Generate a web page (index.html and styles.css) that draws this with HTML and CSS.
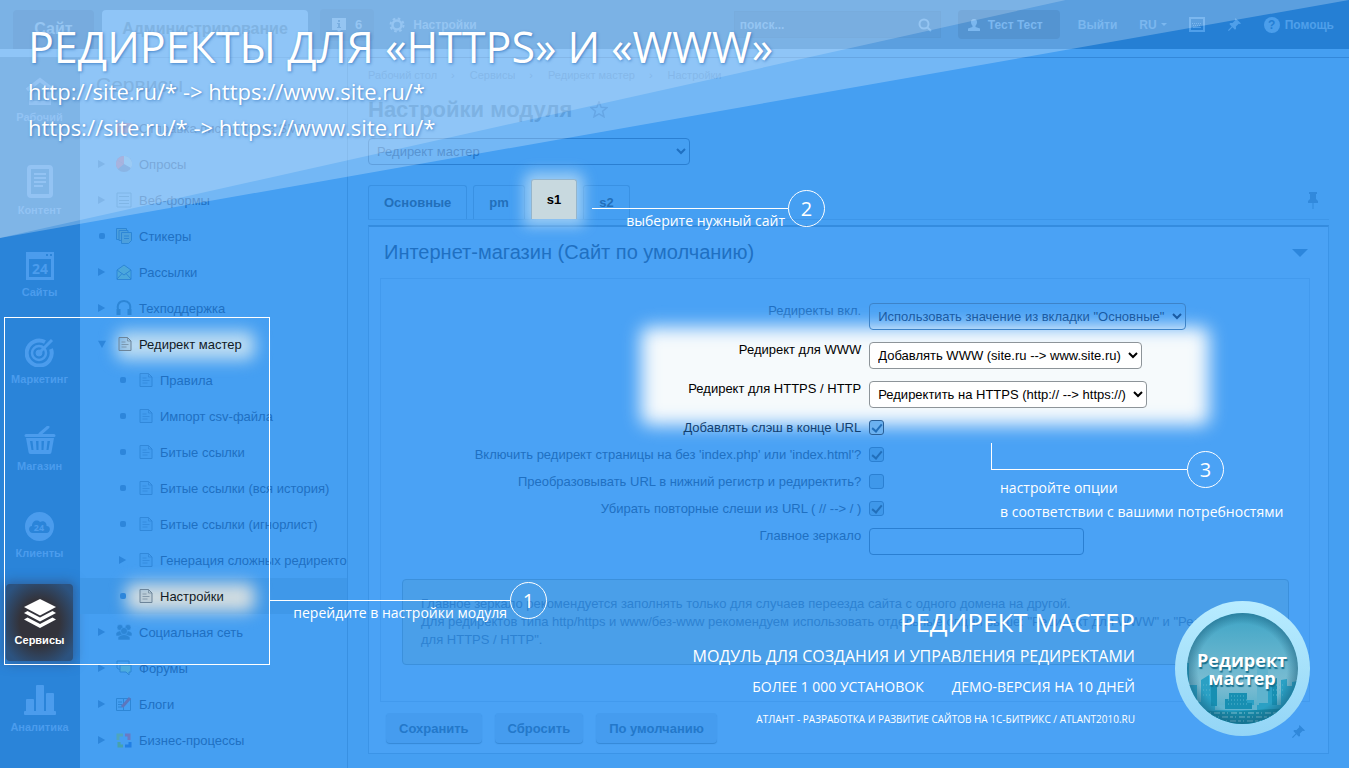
FILE: index.html
```html
<!DOCTYPE html>
<html lang="ru">
<head>
  <meta charset="UTF-8" />
  <meta name="viewport" content="width=device-width, initial-scale=1.0" />
  <title>Редирект мастер - Настройки модуля</title>
  <link rel="stylesheet" href="styles.css">
</head>
<body>

  <!-- общие иконки -->
  <svg class="sprite" aria-hidden="true">
    <symbol id="i-doc" viewBox="0 0 14 16">
      <path d="M1 1.500h8.500l3.500 3.500v9.500H1z" fill="currentColor" fill-opacity=".12" stroke="currentColor"/>
      <path d="M9.500 1.500V5H13M3.500 6h4M3.500 8.500h7M3.500 11h5" fill="none" stroke="currentColor" stroke-opacity=".7"/>
    </symbol>
    <symbol id="i-pin" viewBox="0 0 16 16">
      <path d="M9 1l6 6-1.500.5-1-.3-3 3 .2 2.300-1.200 1L5.800 11 2 15l-1-1 4-3.800L2.500 7.500l1-1.200 2.300.2 3-3-.3-1z" fill="currentColor"/>
    </symbol>
  </svg>

  <header class="topbar">
    <a class="tab-site" href="#">Сайт</a>
    <a class="tab-admin" href="#">Администрирование</a>
    <button class="notice" type="button">
      <svg width="15" height="14" viewBox="0 0 15 14"><path fill="currentColor" fill-rule="evenodd" d="M0 0h14v12H9l-2 2-2-2H0zM6 2v2h2V2zM5 5v1h1v3H5v1h4V9H8V5z"/></svg>
      6
    </button>
    <a class="top-link settings" href="#">
      <svg width="16" height="16" viewBox="0 0 16 16" fill="none" stroke="currentColor"><circle cx="8" cy="8" r="4.500" stroke-width="2.500"/><circle cx="8" cy="8" r="6.500" stroke-width="2" stroke-dasharray="2.600 2.500"/></svg>
      Настройки
    </a>
    <div class="search">
      <input type="text" placeholder="поиск..." aria-label="Поиск">
      <svg width="14" height="14" viewBox="0 0 14 14" fill="none" stroke="currentColor" stroke-width="2"><circle cx="6" cy="6" r="4.500"/><path d="M9 9l4 4"/></svg>
    </div>
    <button class="user" type="button">
      <svg width="12" height="12" viewBox="0 0 12 12"><path fill="currentColor" d="M6 0c2.500 0 3 1.500 3 3 0 1.800-.8 3-1.500 3.800V8L12 9.500V12H0V9.500L4.500 8V6.800C3.800 6 3 4.800 3 3c0-1.500.5-3 3-3z"/></svg>
      Тест Тест
    </button>
    <a class="top-link" href="#">Выйти</a>
    <a class="top-link" href="#">RU <span class="caret"></span></a>
    <a class="top-link" href="#" aria-label="Горячие клавиши">
      <svg width="16" height="15" viewBox="0 0 16 15"><path fill="none" stroke="currentColor" stroke-width="2" d="M1 1h14v13H1z"/><path stroke="currentColor" stroke-dasharray="1 1" d="M3 6.500h10M4 8.500h8"/><path stroke="currentColor" d="M4 10.500h8"/></svg>
    </a>
    <a class="top-link" href="#" aria-label="Закрепить"><svg width="15" height="15"><use href="#i-pin"/></svg></a>
    <a class="top-link help" href="#"><span class="help-mark">?</span>Помощь</a>
  </header>

  <div class="layout">
    <nav class="rail">
      <a class="rail-item rail-home" href="#">
        <svg width="30" height="28" viewBox="0 0 30 28" fill="none" stroke="currentColor" stroke-width="4"><path d="M2 13L15 3l13 10M6 15v11h18V15"/></svg>
        Рабочий
      </a>
      <a class="rail-item rail-content" href="#">
        <svg width="26" height="33" viewBox="0 0 26 33" fill="none" stroke="currentColor"><rect x="2" y="2" width="22" height="29" rx="2" stroke-width="4"/><path stroke-width="2" d="M7 9h12M7 13h12M7 17h12M7 21h9"/></svg>
        Контент
      </a>
      <a class="rail-item" href="#">
        <svg width="28" height="28" viewBox="0 0 28 28"><path fill="currentColor" fill-rule="evenodd" d="M0 0h28v28H0zM3 7v18h22V7zM20 2v2h2V2zM24 2v2h2V2z"/><text class="icon-num" x="14" y="22" text-anchor="middle">24</text></svg>
        Сайты
      </a>
      <a class="rail-item" href="#">
        <svg width="29" height="29" viewBox="0 0 29 29" fill="none" stroke="currentColor"><path stroke-width="4" d="M20 4A12.500 12.500 0 1 0 26 11"/><circle cx="14" cy="15" r="7" stroke-width="2.500"/><circle cx="14" cy="15" r="3" fill="currentColor"/><path stroke-width="3" d="M15 14L27 2"/></svg>
        Маркетинг
      </a>
      <a class="rail-item" href="#">
        <svg width="32" height="28" viewBox="0 0 32 28"><path stroke="currentColor" stroke-width="3" stroke-linecap="round" d="M2 9.500h28M16 8l8-7"/><path fill="currentColor" fill-rule="evenodd" d="M2 12h28l-2.500 14a2 2 0 0 1-2 2h-19a2 2 0 0 1-2-2zM6 15l1.500 9h2L8.500 15zM12 15l.5 9h2V15zM17.500 15v9h2l.5-9zM23.500 15l-1 9h2L26 15z"/></svg>
        Магазин
      </a>
      <a class="rail-item" href="#">
        <svg width="29" height="29" viewBox="0 0 29 29"><path fill="currentColor" fill-rule="evenodd" d="M14.500 0a14.500 14.500 0 1 0 0 29 14.500 14.500 0 0 0 0-29zM8 21c-5 0-5-7-1-7 0-5 5-7 8-4 4-2 7 1 6.500 4 5 0 4 7 0 7z"/><text class="icon-num small" x="14" y="19" text-anchor="middle">24</text></svg>
        Клиенты
      </a>
      <a class="rail-item active" href="#">
        <svg width="32" height="29" viewBox="0 0 32 29" fill="currentColor"><path d="M16 0l16 8-16 8.500L0 8z"/><path d="M0 14l3.500-2L16 18.500 28.500 12l3.500 2-16 8.500z"/><path d="M0 20.500l3.500-2L16 25l12.500-6.500 3.500 2L16 29z"/></svg>
        Сервисы
      </a>
      <a class="rail-item" href="#">
        <svg width="32" height="30" viewBox="0 0 32 30" fill="currentColor"><rect x="2" y="14" width="8" height="13" rx="1"/><rect x="12" y="0" width="8" height="27" rx="1"/><rect x="22" y="8" width="8" height="19" rx="1"/><rect y="26" width="32" height="4" rx="1"/></svg>
        Аналитика
      </a>
    </nav>

    <aside class="menu">
      <h2>Сервисы</h2>
      <ul>
        <li><a href="#"><i class="arrow"></i><svg class="ico red" viewBox="0 0 16 16"><rect x="0" y="3" width="16" height="10" rx="2" fill="currentColor"/></svg>Отправка писем через SMTP</a></li>
        <li><a href="#"><i class="arrow"></i><svg class="ico" viewBox="0 0 16 16"><circle cx="8" cy="8" r="8" fill="#3d84d4"/><path d="M8 8L1 4a8 8 0 0 0 1 9z" fill="#6f80c8"/><path d="M8 8V0a8 8 0 0 0-7 4z" fill="#6f80c8"/><path d="M8 8V0a8 8 0 0 1 7 12z" fill="#5aa9ef"/></svg>Опросы</a></li>
        <li><a href="#"><i class="arrow"></i><svg class="ico" viewBox="0 0 16 16" fill="none" stroke="currentColor"><path d="M1 1h14v14H1zM3 4.500h10M3 8.500h10M3 11.500h10"/></svg>Веб-формы</a></li>
        <li><a href="#"><i class="dot"></i><svg class="ico" viewBox="0 0 16 16" fill="#4c9fdd" stroke="currentColor"><path d="M.5.5h10v11H.5z"/><path d="M3 2.500h9v10H3z"/><path d="M5.500 4.500h10v8l-3 3h-7zM8 8h5M8 10.500h5"/></svg>Стикеры</a></li>
        <li><a href="#"><i class="arrow"></i><svg class="ico" viewBox="0 0 16 16" fill="#4ba7dc" stroke="currentColor"><path d="M1 6l7-5 7 5v9.500H1z"/><path d="M1 6l7 5 7-5M1 15l5-5.500M15 15l-5-5.500" fill="none"/></svg>Рассылки</a></li>
        <li><a href="#"><i class="arrow"></i><svg class="ico" viewBox="0 0 16 16" fill="none" stroke="currentColor"><path d="M2.500 11C0 4 4 1 8 1s8 3 5.500 10" stroke-width="2"/><path d="M2.500 9v6M13.500 9v6" stroke-width="4"/></svg>Техподдержка</a></li>
        <li class="lit"><a href="#"><i class="arrow open"></i><svg class="doc"><use href="#i-doc"/></svg><span class="glow-text">Редирект мастер</span></a>
          <ul>
            <li><a href="#"><i class="dot"></i><svg class="doc"><use href="#i-doc"/></svg>Правила</a></li>
            <li><a href="#"><i class="dot"></i><svg class="doc"><use href="#i-doc"/></svg>Импорт csv-файла</a></li>
            <li><a href="#"><i class="dot"></i><svg class="doc"><use href="#i-doc"/></svg>Битые ссылки</a></li>
            <li><a href="#"><i class="dot"></i><svg class="doc"><use href="#i-doc"/></svg>Битые ссылки (вся история)</a></li>
            <li><a href="#"><i class="dot"></i><svg class="doc"><use href="#i-doc"/></svg>Битые ссылки (игнорлист)</a></li>
            <li><a href="#"><i class="arrow"></i><svg class="doc"><use href="#i-doc"/></svg>Генерация сложных редиректов</a></li>
            <li class="lit current"><a href="#"><i class="dot"></i><svg class="doc"><use href="#i-doc"/></svg><span class="glow-text">Настройки</span></a></li>
          </ul>
        </li>
        <li><a href="#"><i class="arrow"></i><svg class="ico" viewBox="0 0 16 16" fill="currentColor" stroke="#479ff2" stroke-width=".6"><circle cx="4" cy="3.500" r="3"/><circle cx="12" cy="3.500" r="3"/><path d="M0 12V9q4-4 8-1 4-3 8 1v3z"/><circle cx="8" cy="7" r="3.500"/><path d="M2 16v-3q6-5 12 0v3z"/></svg>Социальная сеть</a></li>
        <li><a href="#"><i class="arrow"></i><svg class="ico" viewBox="0 0 16 16" fill="none" stroke="currentColor"><path d="M4 10L1 8V1h12v3"/><path d="M4 5h11v7h-2v3l-3-3H4z" fill="#4cabdf"/></svg>Форумы</a></li>
        <li><a href="#"><i class="arrow"></i><svg class="ico" viewBox="0 0 16 16" fill="none" stroke="currentColor"><path d="M.5 2.500h14v12H.5zM7.500 3v11M2 6h4M2 8.500h4M2 11h4"/><path d="M6 11L14 2" stroke="#5c76bd" stroke-width="3"/></svg>Блоги</a></li>
        <li><a href="#"><i class="arrow"></i><svg class="ico" viewBox="0 0 16 16" fill="none" stroke-width="3"><path d="M2 8V3h5" stroke="#4fa6bd"/><path d="M9 3h4v5" stroke="#6a7ac4"/><path d="M3 10v4h4" stroke="#47a2ac"/><path d="M14 10v4H9" stroke="#217fe4"/></svg>Бизнес-процессы</a></li>
      </ul>
    </aside>

    <main class="content">
      <nav class="crumbs">
        <a href="#">Рабочий стол</a><a href="#">Сервисы</a><a href="#">Редирект мастер</a><a href="#">Настройки</a>
      </nav>
      <h1>Настройки модуля
        <svg width="18" height="17" viewBox="0 0 18 17" fill="none" stroke="currentColor" stroke-width="1.500"><path d="M9 1l2.200 5.200 5.800.4-4.400 3.700 1.400 5.500L9 12.800 4 15.800l1.400-5.500L1 6.600l5.800-.4z"/></svg>
      </h1>
      <select class="module-select" aria-label="Модуль"><option>Редирект мастер</option></select>

      <div class="tabs">
        <button type="button">Основные</button>
        <button type="button">pm</button>
        <button type="button" class="active">s1</button>
        <button type="button">s2</button>
        <svg class="tabs-pin" width="10" height="17" viewBox="0 0 10 17"><path fill="currentColor" d="M1 0h8v2H8v5l2 2v2H5.500v6h-1v-6H0V9l2-2V2H1z"/></svg>
      </div>

      <form class="panel">
        <h3>Интернет-магазин (Сайт по умолчанию) <span class="fold"></span></h3>
        <div class="options">
          <div class="row">
            <label for="active">Редиректы вкл.</label>
            <select id="active"><option>Использовать значение из вкладки "Основные"</option></select>
          </div>
          <div class="spot">
            <div class="row">
              <label for="www">Редирект для WWW</label>
              <select id="www"><option>Добавлять WWW (site.ru --&gt; www.site.ru)</option></select>
            </div>
            <div class="row">
              <label for="https">Редирект для HTTPS / HTTP</label>
              <select id="https"><option>Редиректить на HTTPS (http:// --&gt; https://)</option></select>
            </div>
          </div>
          <div class="row check near">
            <label for="slash">Добавлять слэш в конце URL</label>
            <input type="checkbox" id="slash" checked>
          </div>
          <div class="row check">
            <label for="index">Включить редирект страницы на без 'index.php' или 'index.html'?</label>
            <input type="checkbox" id="index" checked>
          </div>
          <div class="row check">
            <label for="lower">Преобразовывать URL в нижний регистр и редиректить?</label>
            <input type="checkbox" id="lower">
          </div>
          <div class="row check">
            <label for="multi">Убирать повторные слеши из URL ( // --&gt; / )</label>
            <input type="checkbox" id="multi" checked>
          </div>
          <div class="row">
            <label for="mirror">Главное зеркало</label>
            <input type="text" id="mirror">
          </div>
          <p class="note">Главное зеркало рекомендуется заполнять только для случаев переезда сайта с одного домена на другой.<br>
            Для редиректов типа http/https и www/без-www рекомендуем использовать отдельные опции выше: "Редирект для WWW" и "Редирект для HTTPS / HTTP".</p>
        </div>
        <div class="buttons">
          <button type="button">Сохранить</button>
          <button type="button">Сбросить</button>
          <button type="button">По умолчанию</button>
          <svg width="15" height="15"><use href="#i-pin"/></svg>
        </div>
      </form>
    </main>
  </div>

  <!-- подсказки поверх админки -->
  <div class="shade shade-wide"></div>
  <div class="shade shade-top"></div>

  <section class="intro">
    <h2>РЕДИРЕКТЫ ДЛЯ «HTTPS» И «WWW»</h2>
    <p>http://site.ru/* -&gt; https://www.site.ru/*</p>
    <p>https://site.ru/* -&gt; https://www.site.ru/*</p>
  </section>

  <div class="frame"></div>
  <div class="callout callout-menu"><p>перейдите в настройки модуля</p><b>1</b></div>
  <div class="callout callout-tab"><p>выберите нужный сайт</p><b>2</b></div>
  <div class="callout callout-options"><p>настройте опции<br>в соответствии с вашими потребностями</p><b>3</b></div>

  <section class="promo">
    <div class="promo-text">
      <h2>РЕДИРЕКТ МАСТЕР</h2>
      <p class="lead">МОДУЛЬ ДЛЯ СОЗДАНИЯ И УПРАВЛЕНИЯ РЕДИРЕКТАМИ</p>
      <p class="facts"><span>БОЛЕЕ 1 000 УСТАНОВОК</span><span>ДЕМО-ВЕРСИЯ НА 10 ДНЕЙ</span></p>
      <p class="author">АТЛАНТ - РАЗРАБОТКА И РАЗВИТИЕ САЙТОВ НА 1С-БИТРИКС / ATLANT2010.RU</p>
    </div>
    <svg class="logo" width="135" height="135" viewBox="0 0 135 135">
      <defs>
        <linearGradient id="ring" x1="0" y1="0" x2="0" y2="1"><stop offset="0" stop-color="#b8ecff"/><stop offset="1" stop-color="#93d5f6"/></linearGradient>
        <linearGradient id="sky" x1="0" y1="0" x2="0" y2="1"><stop offset="0" stop-color="#3fa5c6"/><stop offset=".65" stop-color="#7cbdd2"/><stop offset="1" stop-color="#3fa6c4"/></linearGradient>
        <radialGradient id="edge"><stop offset=".8" stop-color="#175a78" stop-opacity="0"/><stop offset="1" stop-color="#175a78" stop-opacity=".5"/></radialGradient>
        <clipPath id="disc"><circle cx="67.500" cy="67.500" r="55.500"/></clipPath>
      </defs>
      <circle cx="67.500" cy="67.500" r="67.500" fill="url(#ring)"/>
      <g clip-path="url(#disc)">
        <path fill="url(#sky)" d="M12 12h111v111H12z"/>
        <path fill="#2aa0c4" d="M12 62v58h111V80l-6 1v4h-5V78l-6 1v25h-4V77l-9 3v22h-9V104h-5v-5H57v6H42V79l-8-5-8 5v22h-4V84h-8V62z"/>
        <path fill="#5fb3ce" d="M82 66h11v36H82zM40 104h42v5H40z"/>
        <path fill="#178fb2" d="M54 92h18v10h5v6H50V98h4zM36 80l6-1v26h-6zM97 80l5-3v27h-5z"/>
        <path fill="#1688a6" d="M12 107q30 5 55 3t56-3v16H12z"/>
        <path stroke="#8fcbd9" stroke-dasharray="3 2 1 3 6 2" stroke-width="1.500" stroke-opacity=".6" d="M30 112h80M38 116h70M46 120h50"/>
        <path stroke="#57b4ce" stroke-dasharray="1 2" d="M28 84h7M28 89h7M28 94h7M56 95h14M53 99h20M53 103h20M98 84h10M98 89h10M98 94h10"/>
        <circle cx="67.500" cy="67.500" r="55.500" fill="url(#edge)"/>
      </g>
      <text x="67" y="66" text-anchor="middle">Редирект</text>
      <text x="67" y="84" text-anchor="middle">мастер</text>
    </svg>
  </section>

</body>
</html>
```

FILE: styles.css
```css
* {
  margin: 0;
  padding: 0;
  box-sizing: border-box;
}

body {
  position: relative;
  min-height: 100vh;
  height: 100vh;
  overflow: hidden;
  background-color: #459ff2;
  color: #1f70c2;
  font-family: "Liberation Sans", Arial, sans-serif;
  font-size: 13px;
}

a {
  color: inherit;
  text-decoration: none;
}

ul {
  list-style: none;
}

button, select, input {
  font: inherit;
  color: inherit;
  border: none;
  background: transparent;
}

.sprite {
  position: absolute;
  width: 0;
  height: 0;
}

/* TOP BAR */
.topbar {
  display: flex;
  align-items: center;
  height: 49px;
  padding: 0 15px 0 13px;
  background-color: #257fd4;
  color: #4f9fea;
  font-weight: bold;
}
.tab-site, .tab-admin {
  align-self: flex-end;
  height: 39px;
  line-height: 38px;
  font-size: 16px;
  text-align: center;
  border-radius: 4px 4px 0 0;
}
.tab-site {
  width: 81px;
  margin-right: 8px;
  background-color: #1d75c8;
}
.tab-admin {
  width: 206px;
  background-color: #459ff2;
  color: #2a80cf;
}
.notice {
  display: flex;
  align-items: center;
  gap: 8px;
  height: 32px;
  margin: 0 15px 0 12px;
  padding: 0 12px;
  background-color: #2079cc;
  border-radius: 4px;
  font-weight: bold;
}
.top-link {
  display: flex;
  align-items: center;
  gap: 8px;
  margin-left: 22px;
  font-size: 12px;
}
.settings {
  margin-left: 0;
}
.user + .top-link {
  margin-left: 18px;
}
.search {
  display: flex;
  align-items: center;
  width: 207px;
  height: 27px;
  margin: 0 17px 0 auto;
  padding: 0 8px 0 5px;
  background-color: #2079cc;
  border: 1px solid #1f76c7;
}
.search input {
  flex: 1;
  min-width: 0;
}
.search input::placeholder {
  color: #4f9fea;
  font-size: 12px;
  font-weight: bold;
}
.user {
  display: flex;
  align-items: center;
  gap: 8px;
  height: 29px;
  width: 102px;
  padding: 0 10px;
  background-color: #1b71c2;
  border-radius: 4px;
  font-weight: bold;
  font-size: 12px;
  white-space: nowrap;
}
.caret {
  margin-left: -4px;
  border: 3px solid transparent;
  border-top-color: #4f9fea;
  border-bottom: none;
}
.help {
  gap: 5px;
}
.help-mark {
  width: 16px;
  height: 16px;
  line-height: 16px;
  border-radius: 50%;
  background-color: #4b9eeb;
  color: #257fd4;
  text-align: center;
}

/* LAYOUT */
.layout {
  display: flex;
  min-height: calc(100vh - 49px);
}

.rail {
  flex: 0 0 80px;
  display: flex;
  flex-direction: column;
  gap: 10px;
  padding: 14px 7px 0 6px;
  border-top: 8px solid #459ff2;
  background-color: #2a84d9;
  color: #4b9ced;
  font-size: 11px;
  font-weight: bold;
}
.rail-item {
  flex: none;
  display: flex;
  flex-direction: column;
  align-items: center;
  justify-content: flex-end;
  gap: 6px;
  height: 77px;
  padding-bottom: 15px;
  border-radius: 4px;
}
.rail-home {
  height: 67px;
  margin-bottom: 6px;
}
.rail-content {
  height: 72px;
  padding-bottom: 10px;
}
.rail-item.active {
  color: #fff;
  background-color: #303848;
  background-image: radial-gradient(closest-side, #33333b 60%, #2c5380 120%);
  box-shadow: 0 0 12px 2px rgba(52, 70, 110, 0.6);
}
.icon-num {
  font: bold 14px "Open Sans", sans-serif;
  fill: currentColor;
}
.icon-num.small {
  font-size: 9px;
}

/* MENU */
.menu {
  flex: 0 0 268px;
  overflow: hidden;
  border-top: 1px solid #3a92e4;
  border-right: 1px solid #3890e2;
  margin-top: 8px;
}
.menu h2 {
  height: 52px;
  padding: 14px 0 0 16px;
  font-size: 21px;
  font-weight: normal;
  line-height: 26px;
  color: #2c80cf;
}
.menu li a {
  display: flex;
  align-items: center;
  height: 36px;
  padding-left: 18px;
  white-space: nowrap;
}
.menu li li a {
  padding-left: 39px;
}
.menu li li .doc {
  color: #3188da;
}
.ico, .doc {
  flex: none;
  color: #2d86d6;
}
.ico {
  width: 16px;
  height: 16px;
  margin: 0 7px 0 10px;
}
.red {
  color: #6f88cc;
}
.doc {
  width: 14px;
  height: 16px;
  margin: 0 7px 0 12px;
}
.arrow {
  flex: none;
  width: 8px;
  height: 8px;
  background-color: #2d86db;
  clip-path: polygon(0 0, 90% 50%, 0 100%);
}
.arrow.open {
  clip-path: polygon(0 10%, 100% 10%, 50% 100%);
}
.dot {
  flex: none;
  width: 6px;
  height: 6px;
  margin: 0 1px;
  border-radius: 2px;
  background-color: #2d86db;
}
.menu .lit > a {
  position: relative;
  z-index: 0;
  color: #111a26;
}
.menu .lit > a .doc {
  color: #6c8499;
}
.glow-text::before {
  content: "";
  position: absolute;
  z-index: -1;
  left: 36px;
  right: 92px;
  top: 5px;
  bottom: 2px;
  border-radius: 8px;
  background-color: #bcdcf2;
  filter: blur(8px);
}
.current > a {
  background-color: #3f98e9;
}
.current .glow-text::before {
  left: 46px;
  background-color: #d3dde0;
}

/* CONTENT */
.content {
  flex: 1;
  min-width: 0;
  margin-top: 8px;
  padding: 0 20px;
  border-top: 1px solid #3388da;
}
.crumbs {
  display: flex;
  padding-top: 11px;
  font-size: 11px;
  line-height: 13px;
  color: #3389dc;
}
.crumbs a + a::before {
  content: "›";
  margin: 0 15px 0 14px;
}
.content h1 {
  display: flex;
  align-items: center;
  gap: 18px;
  padding: 14px 0 15px;
  font-size: 22px;
  line-height: 27px;
  color: #277fd2;
}
.content h1 svg {
  color: #3389dc;
}
select {
  height: 27px;
  padding: 0 4px;
  border: 1px solid #2a7fd2;
  border-radius: 4px;
}
.module-select {
  display: block;
  width: 322px;
}

.tabs {
  display: flex;
  align-items: flex-end;
  gap: 6px;
  height: 55px;
  border-bottom: 1px solid #3d96e9;
}
.tabs button {
  height: 34px;
  padding: 0 15px;
  border: 1px solid #3991e3;
  border-bottom: none;
  border-radius: 3px 3px 0 0;
  color: #226fba;
  font-weight: bold;
}
.tabs button.active {
  position: relative;
  height: 40px;
  border-color: #94b5cc;
  color: #000;
  background-color: #c8d9df;
  box-shadow: 0 0 14px 7px rgba(185, 220, 245, 0.75);
}
.tabs-pin {
  margin: 0 11px 10px auto;
  color: #3189dc;
}

.panel {
  margin-top: 5px;
  padding: 0 18px 9px 11px;
  border: 1px solid #3b94e7;
  border-top: 2px solid #348cdf;
  background-color: #4aa2f5;
}
.panel h3 {
  display: flex;
  justify-content: space-between;
  align-items: center;
  height: 51px;
  padding: 0 2px 0 4px;
  font-size: 20px;
  font-weight: normal;
}
.fold {
  border: 8px solid transparent;
  border-top-color: #2c86dc;
  border-bottom: none;
}
.options {
  padding: 24px 20px 36px 21px;
  border: 1px solid #429aee;
}
.row {
  display: grid;
  grid-template-columns: calc(52% - 2px) 1fr;
  column-gap: 8px;
  justify-items: start;
  align-items: start;
  height: 39px;
}
.row label {
  justify-self: end;
  line-height: 15px;
}
#active {
  position: relative;
  z-index: 1;
  border-color: #3d83c8;
  color: #1a5ba3;
}
.spot {
  position: relative;
  z-index: 0;
  color: #000;
}
.spot::before {
  content: "";
  position: absolute;
  z-index: -1;
  left: 27%;
  right: 9%;
  top: -15px;
  bottom: -5px;
  border-radius: 8px;
  background-color: #f6fafc;
  filter: blur(9px);
}
.spot select {
  border-color: #8d9499;
  background-color: #fff;
}
.row.check {
  height: 27px;
}
.row.near {
  position: relative;
  z-index: 1;
  color: #123f70;
}
input[type="checkbox"] {
  appearance: none;
  width: 15px;
  height: 15px;
  border: 1px solid #2b80d2;
  border-radius: 3px;
  background-color: #3f98ea;
}
input[type="checkbox"]:checked::after {
  content: "";
  display: block;
  width: 4px;
  height: 8px;
  margin: 1px 0 0 4px;
  border: solid #226fba;
  border-width: 0 2px 2px 0;
  transform: rotate(40deg);
}
.near input[type="checkbox"] {
  border-color: #2a5f96;
  background-color: #6bb1f0;
}
#mirror {
  width: 215px;
  height: 27px;
  border: 1px solid #2a7fd2;
  border-radius: 4px;
}
.note {
  margin-top: 12px;
  padding: 15px 32px 15px 18px;
  border: 1px solid #3b90dc;
  border-radius: 4px;
  background-color: #4a9fe9;
  color: #2d82d2;
  line-height: 18px;
}
.buttons {
  display: flex;
  align-items: center;
  gap: 13px;
  padding: 11px 0 1px 6px;
}
.buttons button {
  height: 30px;
  padding: 0 13px;
  border-radius: 4px;
  background-color: #459cef;
  box-shadow: 0 1px 1px #3588d6;
  color: #2378ca;
  font-weight: bold;
}
.buttons svg {
  margin: 6px 4px 0 auto;
  color: #3088da;
}

/* OVERLAY */
.shade {
  position: absolute;
  top: 0;
  left: 0;
  z-index: 2;
  width: 100%;
  height: 238px;
}
.shade-wide {
  background-color: rgba(255, 255, 255, 0.25);
  clip-path: polygon(0 0, 100% 0, 0 100%);
}
.shade-top {
  background-color: rgba(255, 255, 255, 0.2);
  clip-path: polygon(0 0, 79% 0, 0 100%);
}

.intro, .callout, .promo {
  position: absolute;
  z-index: 3;
  color: #fff;
  font-family: "Open Sans", sans-serif;
  white-space: nowrap;
}
.intro {
  top: 20px;
  left: 28px;
  font-size: 22px;
  line-height: 36px;
  text-shadow: 1px 1px 3px rgba(20, 90, 170, 0.6);
}
.intro h2 {
  font-size: 43px;
  font-weight: normal;
  line-height: 53px;
}

.frame {
  position: absolute;
  top: 317px;
  left: 4px;
  width: 266px;
  height: 348px;
  border: 1px solid #fff;
}

.callout {
  display: flex;
  font-size: 14px;
}
.callout p {
  margin-top: 18px;
  padding-right: 3px;
  border-top: 1px solid #fff;
  line-height: 24px;
  text-align: right;
}
.callout b {
  width: 37px;
  height: 37px;
  border: 1px solid #fff;
  border-radius: 50%;
  font-size: 20px;
  font-weight: normal;
  line-height: 35px;
  text-align: center;
}
.callout-menu {
  top: 582px;
  left: 270px;
}
.callout-menu p {
  width: 240px;
}
.callout-tab {
  top: 190px;
  left: 592px;
}
.callout-tab p {
  width: 196px;
}
.callout-options {
  top: 451px;
  left: 991px;
}
.callout-options p {
  width: 196px;
  padding: 6px 0 0 9px;
  text-align: left;
}
.callout-options::before {
  content: "";
  position: absolute;
  top: -8px;
  left: 0;
  height: 27px;
  border-left: 1px solid #fff;
}

.promo {
  right: 39px;
  bottom: 32px;
  display: flex;
  gap: 40px;
  align-items: flex-end;
  text-align: right;
}
.promo h2 {
  font-size: 26px;
  font-weight: normal;
  line-height: 36px;
}
.promo .lead {
  font-size: 16px;
  line-height: 32px;
}
.promo .facts {
  display: flex;
  justify-content: flex-end;
  gap: 28px;
  font-size: 14px;
  line-height: 30px;
}
.promo .author {
  font-size: 10px;
  line-height: 34px;
}
.logo text {
  fill: #fff;
  font-size: 18px;
  font-weight: bold;
  text-shadow: 1px 2px 1px #16708f;
}
```
